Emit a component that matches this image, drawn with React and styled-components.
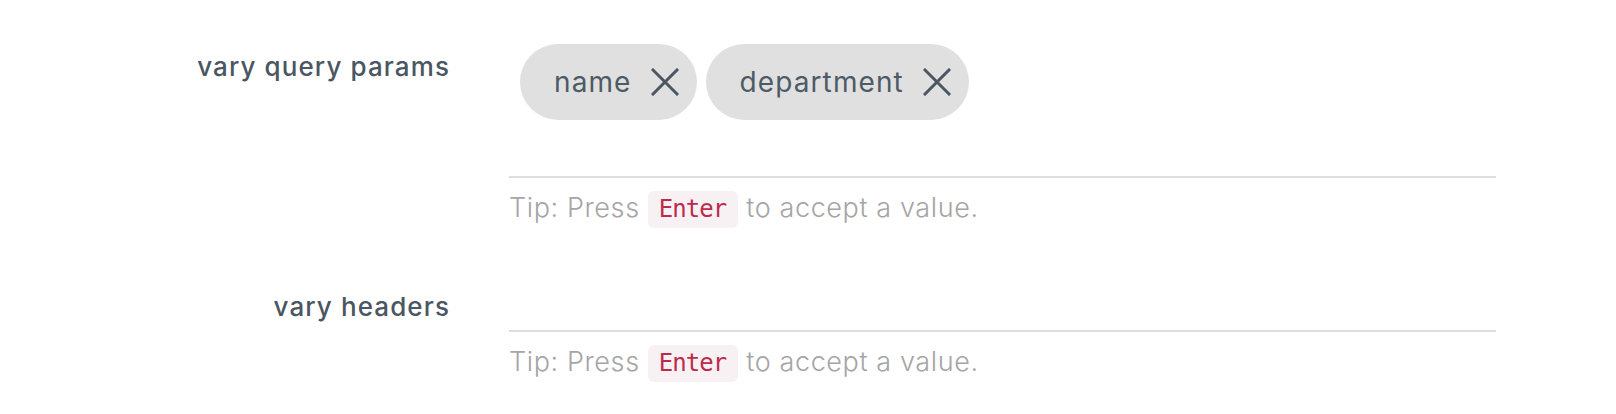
import React from "react";
import styled, { createGlobalStyle } from "styled-components";

const GlobalStyle = createGlobalStyle`
  html, body {
    margin: 0;
    padding: 0;
    background: #ffffff;
  }
  body {
    font-family: Inter, "Noto Sans", sans-serif;
  }
`;

const Form = styled.div`
  padding-top: 44px;
  display: flex;
  flex-direction: column;
  gap: 46px;
`;

const Row = styled.div`
  display: grid;
  grid-template-columns: 450px 987px;
  column-gap: 59px;
  align-items: start;
`;

const Label = styled.label`
  text-align: right;
  font-size: 26px;
  font-weight: 500;
  letter-spacing: 1.1px;
  color: #4a5661;
  line-height: 30px;
  padding-top: ${(p) => p.$offset}px;
`;

const Field = styled.div`
  display: flex;
  flex-direction: column;
`;

const ChipList = styled.div`
  display: flex;
  flex-wrap: wrap;
  gap: 9px;
  padding-left: 11px;
`;

const Chip = styled.span`
  display: inline-flex;
  align-items: center;
  gap: 19px;
  height: 76px;
  padding: 0 18px 0 34px;
  border-radius: 38px;
  background: #e0e0e0;
  color: #4e5a65;
  font-size: 28px;
  font-weight: 400;
  letter-spacing: 1.1px;
`;

const RemoveButton = styled.button`
  display: flex;
  align-items: center;
  justify-content: center;
  width: 28px;
  height: 28px;
  padding: 0;
  border: none;
  background: none;
  color: #4a5661;
  cursor: pointer;
`;

const Input = styled.input`
  box-sizing: border-box;
  height: 58px;
  width: 100%;
  border: none;
  border-bottom: 2px solid #dedede;
  background: transparent;
  outline: none;
  font-family: inherit;
  font-size: 24px;
`;

const Tip = styled.p`
  margin: 11px 0 0;
  font-size: 27px;
  font-weight: 300;
  letter-spacing: 0.6px;
  color: #a5a5a5;
  line-height: 37px;
`;

const Code = styled.code`
  display: inline-block;
  padding: 0 12px 0 11px;
  border-radius: 6px;
  background: #f8f1f3;
  color: #bd2a4c;
  font-family: "DejaVu Sans Mono", "Liberation Mono", monospace;
  font-size: 24px;
  letter-spacing: -1px;
  line-height: 37px;
`;

const CloseIcon = () => (
  <svg width="28" height="28" viewBox="0 0 28 28" fill="none">
    <path d="M2 2 L26 26 M26 2 L2 26" stroke="currentColor" strokeWidth="3" strokeLinecap="square" />
  </svg>
);

const TagInput = ({ label, values, labelOffset }) => (
  <Row>
    <Label $offset={labelOffset}>{label}</Label>
    <Field>
      {values.length > 0 && (
        <ChipList>
          {values.map((v) => (
            <Chip key={v}>
              {v}
              <RemoveButton aria-label={`remove ${v}`}>
                <CloseIcon />
              </RemoveButton>
            </Chip>
          ))}
        </ChipList>
      )}
      <Input />
      <Tip>
        Tip: Press <Code>Enter</Code> to accept a value.
      </Tip>
    </Field>
  </Row>
);

export default function App() {
  return (
    <>
      <GlobalStyle />
      <Form>
        <TagInput label="vary query params" values={["name", "department"]} labelOffset={8} />
        <TagInput label="vary headers" values={[]} labelOffset={18} />
      </Form>
    </>
  );
}
